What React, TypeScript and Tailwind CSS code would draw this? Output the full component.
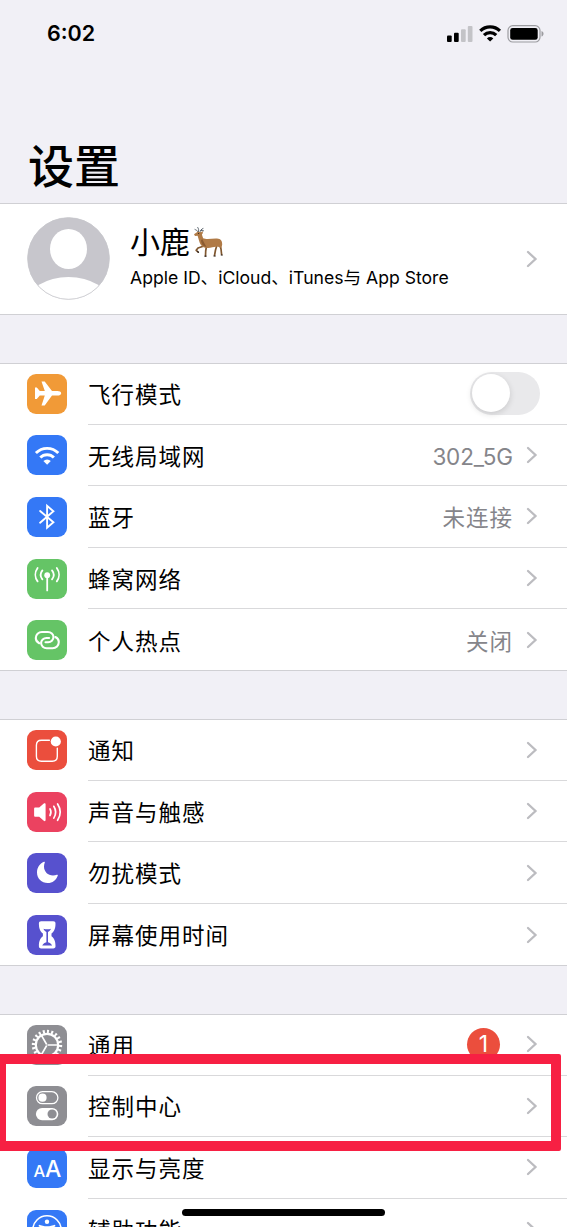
import type { ReactNode } from 'react';

type Row = {
  label: string;
  icon: ReactNode;
  color: string;
  value?: string;
  badge?: string;
  toggle?: boolean;
};

const stroke = {
  fill: 'none',
  stroke: 'currentColor',
  strokeLinecap: 'round' as const,
  strokeLinejoin: 'round' as const,
};

const icons = {
  plane: (
    <path
      fill="currentColor"
      d="M34.2 19.3c0 1.4-1.8 2.3-3.8 2.3H25l-7.3 9.8h-3.2l3.3-9.8h-5L9.8 25H8V13.6h1.8l3 3.5h5l-3.3-9.7h3.2l7.3 9.7h5.4c2 0 3.8.9 3.8 2.2z"
    />
  ),
  wifi: (
    <>
      <path {...stroke} strokeLinecap="butt" strokeWidth="2.9" d="M8.9 18.1a15.6 15.6 0 0 1 22.4 0M13.3 22.6a9.4 9.4 0 0 1 13.6 0" />
      <path fill="currentColor" d="M20.1 29.8l-3.7-3.9a5.3 5.3 0 0 1 7.4 0z" />
    </>
  ),
  bluetooth: <path {...stroke} strokeLinejoin="miter" strokeWidth="1.9" d="M13.1 14l13.3 11.3-6.3 5.4V8.9l6.3 5.4L13.1 25.7" />,
  cellular: (
    <>
      <circle cx="20.2" cy="16.2" r="2.9" fill="currentColor" />
      <path {...stroke} strokeWidth="1.8" d="M20.2 17v14.4" />
      <path {...stroke} strokeWidth="1.8" d="M15.4 11.4a7.2 7.2 0 0 0 0 9M25 11.4a7.2 7.2 0 0 1 0 9M10.6 9a11.4 11.4 0 0 0 0 13.4M29.8 9a11.4 11.4 0 0 1 0 13.4" />
    </>
  ),
  hotspot: (
    <g {...stroke} strokeWidth="2.1">
      <path d="M12.2 23.2C10 22.2 8.8 20.3 8.8 18.100c0-3.500 2.700-6.100 6.200-6.100h5.900c3.100 0 5.600 2.300 5.600 5.100s-2.400 5.100-5.400 5.100h-2.600" />
      <path d="M28.400 17c2.200 1 3.400 2.900 3.400 5.100 0 3.500-2.700 6.100-6.200 6.100h-5.900c-3.100 0-5.600-2.300-5.600-5.100s2.400-5.100 5.400-5.100h2.600" />
    </g>
  ),
  notification: (
    <>
      <path {...stroke} strokeWidth="1.4" d="M22.4 10.3h-8c-3.1 0-5 1.9-5 5v10.9c0 3.1 1.9 5 5 5h10.9c3.1 0 5-1.9 5-5v-8.1" />
      <circle cx="28.8" cy="11.5" r="5.1" fill="currentColor" />
    </>
  ),
  sound: (
    <>
      <path fill="currentColor" d="M8.4 15.6h3.8l4.6-4.1c.8-.7 1.8-.3 1.8.7v15.9c0 1-1 1.4-1.8.7l-4.6-4.1H8.4c-.8 0-1.3-.5-1.3-1.3V17c0-.9.5-1.4 1.3-1.4z" />
      <path {...stroke} strokeWidth="1.7" d="M23 16.9a6.6 6.6 0 0 1 0 6.6M26.8 14.3a11 11 0 0 1 0 11.8M30.6 12a15 15 0 0 1 0 16.3" />
    </>
  ),
  moon: (
    <path fill="currentColor" d="M17 8.8c.5-.2 1 .2.8.8-.5 1.3-.8 2.6-.8 4 0 5.2 3.8 8.9 9 8.9 1.4 0 2.7-.3 3.9-.8.6-.2 1.1.3.9.8-1.7 4.6-5.2 7.6-10.1 7.6C14.6 30.1 10 25.6 10 19.6c0-5 2.6-9 7-10.8z" />
  ),
  hourglass: (
    <>
      <path fill="currentColor" d="M14.2 6.3h12c1.6 0 2.3.9 2.3 2.2 0 5.1-1.2 7.8-4 10v2.8c2.8 2.2 4 4.9 4 10 0 1.3-.7 2.2-2.3 2.2h-12c-1.6 0-2.3-.9-2.3-2.2 0-5.1 1.2-7.8 4-10v-2.8c-2.8-2.2-4-4.9-4-10 0-1.3.7-2.2 2.3-2.2z" />
      <path fill="#5751ce" d="M16.5 13.800c2 .7 5.500.7 7.400 0-.4 1.400-1.200 2.400-2.900 3.200v10.200c2 .7 3.400 1.600 4.200 3.300H15.200c.8-1.700 2.200-2.600 4.200-3.300V17c-1.700-.8-2.500-1.800-2.900-3.200z" />
    </>
  ),
  gear: (
    <g fill="none" stroke="currentColor">
      <circle cx="20" cy="20" r="11.2" strokeWidth="2.2" />
      <circle cx="20" cy="20" r="13.5" strokeWidth="3.4" pathLength="80" strokeDasharray="1.9 2.1" />
      <path strokeWidth="1.6" d="M20.5 20h10M19.7 19.5l-5.2-9M19.7 20.5l-5.2 9" />
    </g>
  ),
  control: (
    <>
      <rect x="9.5" y="5.7" width="21.4" height="12" rx="6" fill="none" stroke="currentColor" strokeWidth="1.3" />
      <circle cx="15.5" cy="11.7" r="4.1" fill="currentColor" />
      <rect x="8.9" y="21.9" width="22.4" height="12.3" rx="6.15" fill="currentColor" />
      <circle cx="25.1" cy="28" r="4.6" fill="#8e8e93" />
    </>
  ),
  display: (
    <g fill="currentColor" className="font-['Inter'] font-medium">
      <text x="6.6" y="28.5" fontSize="16.5">A</text>
      <text x="18" y="28.5" fontSize="23">A</text>
    </g>
  ),
  accessibility: (
    <>
      <circle cx="20" cy="20" r="14.2" fill="none" stroke="currentColor" strokeWidth="1.6" />
      <circle cx="20" cy="11.8" r="2.2" fill="currentColor" />
      <path {...stroke} strokeWidth="1.9" d="M12.6 15.8l5 1.3h4.8l5-1.3M18.3 17.5v5l-2 6.5M21.7 17.5v5l2 6.5M20 17.5v4" />
    </>
  ),
};

const groups: Row[][] = [
  [
    { label: '飞行模式', icon: icons.plane, color: 'bg-[#f19a37]', toggle: true },
    { label: '无线局域网', icon: icons.wifi, color: 'bg-[#3478f6]', value: '302_5G' },
    { label: '蓝牙', icon: icons.bluetooth, color: 'bg-[#3478f6]', value: '未连接' },
    { label: '蜂窝网络', icon: icons.cellular, color: 'bg-[#65c466]' },
    { label: '个人热点', icon: icons.hotspot, color: 'bg-[#65c466]', value: '关闭' },
  ],
  [
    { label: '通知', icon: icons.notification, color: 'bg-[#eb4e3d]' },
    { label: '声音与触感', icon: icons.sound, color: 'bg-[#eb4260]' },
    { label: '勿扰模式', icon: icons.moon, color: 'bg-[#5751ce]' },
    { label: '屏幕使用时间', icon: icons.hourglass, color: 'bg-[#5751ce]' },
  ],
  [
    { label: '通用', icon: icons.gear, color: 'bg-[#8e8e93]', badge: '1' },
    { label: '控制中心', icon: icons.control, color: 'bg-[#8e8e93]' },
    { label: '显示与亮度', icon: icons.display, color: 'bg-[#3478f6]' },
    { label: '辅助功能', icon: icons.accessibility, color: 'bg-[#3478f6]' },
  ],
];

function Chevron() {
  return (
    <svg className="h-[18px] w-3 shrink-0 text-[#bcbcc0]" viewBox="0 0 12 18">
      <path {...stroke} strokeLinejoin="miter" strokeWidth="2.3" d="M2 2l7.5 7L2 16" />
    </svg>
  );
}

function Deer() {
  return (
    <svg className="h-8 w-[31px] shrink-0" viewBox="0 0 31 32" role="img" aria-label="鹿">
      <path fill="none" stroke="#59636b" strokeWidth="1" strokeLinecap="round" d="M5.5 6.5C4.500 4.500 3 4 2 3.500M5.500 6.500C6 4 5.500 2.500 4.800 1.500M7 6.500c0-2 1.500-3.500 3-4M8 4.500l2.500.3" />
      <path fill="none" stroke="#80572f" strokeWidth="1.7" strokeLinecap="round" strokeLinejoin="round" d="M11 20l-6 2-1.800 2.300L5 26M13.500 20l-.8 5-.2 5M24 19l-1.500 5-1 5.500M26.500 18l1.500 5 .6 5.500" />
      <path fill="#b07a46" d="M1 8.200l3.700-2.400 3.500.5L9.600 5l.3 2-1 1.500 1.200 3.700c3 1.400 9.100.2 13.900.4 3.800.2 5.200 2.200 5.200 6l-.8 3.300-3.800-1.400-5.200.8c-3 1-6.200.8-8.400.2-2.800-1.200-4.200-4-5-7L4.600 9.800 2 9.900z" />
      <path fill="#8b5b31" d="M9.100 13c1.500 2 2.500 5 4.500 8-3.500-.5-5.300-3-5.600-6.500z" />
      <circle cx="5.6" cy="7.5" r=".6" fill="#2c2018" />
      <path fill="none" stroke="#302620" strokeWidth="1.2" strokeLinecap="round" d="M4.500 25.500l1 .8M12 30.200h1M21 30h1.200M28.300 29h1" />
    </svg>
  );
}

function StatusBar() {
  return (
    <div className="flex h-[68px] items-center justify-between pr-[23px] pl-[47px]">
      <span className="font-['Inter'] text-[21.5px] leading-none font-semibold">6:02</span>
      <svg width="97" height="20" viewBox="0 0 97 20">
        <rect x="0" y="11.5" width="4.7" height="6.5" rx="1" />
        <rect x="7" y="8.8" width="4.7" height="9.2" rx="1" />
        <rect x="14" y="5.3" width="4.7" height="12.7" rx="1" fill="#c3c3c7" />
        <rect x="20.8" y="2" width="4.7" height="16" rx="1" fill="#c3c3c7" />
        <path fill="none" stroke="#000" strokeWidth="3.2" d="M33.3 6.8a14 14 0 0 1 19.6 0M37 11.2a8.7 8.7 0 0 1 12.2 0" />
        <path d="M43.1 17.6l-3.2-3.2a4.6 4.6 0 0 1 6.4 0z" />
        <rect x="61" y="1.7" width="32" height="16.3" rx="4.8" fill="none" stroke="#9c9ca0" strokeWidth="1.2" />
        <rect x="63.2" y="4" width="27.5" height="11.8" rx="2.4" />
        <path fill="#9c9ca0" d="M94.5 7v5.6c1.2-.4 2-1.5 2-2.8s-.8-2.4-2-2.8z" />
      </svg>
    </div>
  );
}

function SettingRow({ row, last }: { row: Row; last: boolean }) {
  const latin = /\d/.test(row.value ?? '');
  return (
    <div className="flex h-[61.6px] shrink-0 items-center pl-[27px]">
      <svg className={`size-10 shrink-0 rounded-[9px] text-white ${row.color}`} viewBox="0 0 40 40">
        {row.icon}
      </svg>
      <div className={`ml-[21px] flex h-full flex-1 items-center border-[#d9d9db] pr-[29px] ${last ? '' : 'border-b'}`}>
        <span className="flex-1 pt-[3px] text-[22.5px] tracking-[1px] text-black">{row.label}</span>
        {row.value && (
          <span className={`mr-[13px] pt-[3px] text-[22.5px] text-[#85858a] ${latin ? 'tracking-[-0.15px]' : 'tracking-[1px]'}`}>
            {row.value}
          </span>
        )}
        {row.badge && (
          <span className="mr-[26px] flex size-[33px] items-center justify-center rounded-full bg-[#eb4e3d] text-[23px] text-white">
            {row.badge}
          </span>
        )}
        {row.toggle ? (
          <span className="-mr-[2px] flex h-[43px] w-[70px] items-center rounded-full bg-[#e9e9eb] pl-[2px]">
            <span className="size-[38px] rounded-full bg-white shadow-[0_2px_6px_rgba(0,0,0,0.14)]" />
          </span>
        ) : (
          <Chevron />
        )}
      </div>
    </div>
  );
}

export default function App() {
  return (
    <div className="relative flex h-[1227px] w-[567px] flex-col overflow-hidden bg-[#f1f0f6] font-['Inter','Noto_Sans_CJK_SC',sans-serif] text-black">
      <header className="h-[203px] shrink-0">
        <StatusBar />
        <h1 className="mt-[64px] pl-[28px] text-[46px] leading-[68px] font-medium">设置</h1>
      </header>

      <section className="flex h-[112px] shrink-0 items-center border-y border-[#d0d0d4] bg-white pr-[29px] pb-px pl-[27px]">
        <svg className="size-[83px] shrink-0" viewBox="0 0 83 83">
          <clipPath id="avatar">
            <circle cx="41.5" cy="41.5" r="41" />
          </clipPath>
          <g clipPath="url(#avatar)">
            <rect width="83" height="83" fill="#c7c6cc" />
            <ellipse cx="41.5" cy="32" rx="18.5" ry="20" fill="#fff" />
            <ellipse cx="41.5" cy="86" rx="41" ry="26" fill="#fff" />
          </g>
          <circle cx="41.5" cy="41.5" r="40.8" fill="none" stroke="#c7c6cc" strokeWidth=".8" />
        </svg>
        <div className="ml-[20px] flex-1 pb-[3px]">
          <div className="flex h-[38px] items-center">
            <span className="text-[30px] leading-[36px]">小鹿</span>
            <span className="ml-[3px]">
              <Deer />
            </span>
          </div>
          <p className="mt-[4px] text-[17.6px] leading-[26px] whitespace-nowrap">Apple ID、iCloud、iTunes与 App Store</p>
        </div>
        <Chevron />
      </section>

      {/* 设置分组 */}
      <div className="flex flex-col gap-[48.3px] pt-[48px]">
        {groups.map((rows, i) => (
          <section
            key={i}
            className="flex shrink-0 flex-col bg-white shadow-[inset_0_1px_0_#d0d0d4,inset_0_-1px_0_#d0d0d4]"
          >
            {rows.map((row, j) => (
              <SettingRow key={row.label} row={row} last={j === rows.length - 1} />
            ))}
          </section>
        ))}
      </div>

      {/* 高亮框 */}
      <div className="absolute top-[1054px] left-[-4px] h-[97px] w-[565px] rounded-[2px] border-[10px] border-[#f72043]" />
      {/* Home 指示条 */}
      <div className="absolute top-[1209px] left-[182px] h-[7px] w-[203px] rounded-full bg-black" />
    </div>
  );
}
